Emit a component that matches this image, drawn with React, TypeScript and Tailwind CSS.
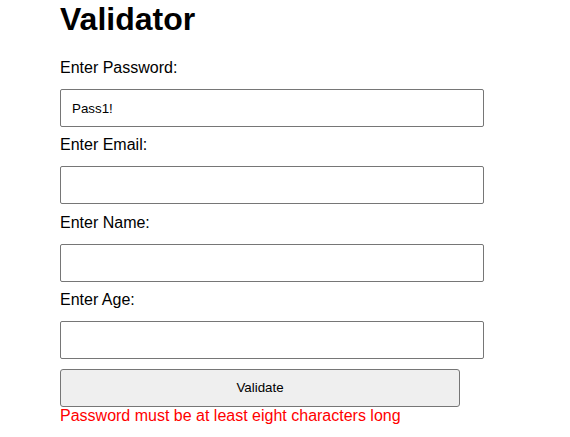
import React, { useState } from 'react';

const fields = [
  { id: 'password', label: 'Enter Password:', initial: 'Pass1!' },
  { id: 'email', label: 'Enter Email:', initial: '' },
  { id: 'name', label: 'Enter Name:', initial: '' },
  { id: 'age', label: 'Enter Age:', initial: '' },
];

export default function App() {
  const [values, setValues] = useState<Record<string, string>>(
    Object.fromEntries(fields.map((f) => [f.id, f.initial]))
  );
  const [error] = useState('Password must be at least eight characters long');

  return (
    <div className="min-h-[437px] bg-white pl-[60px] font-['Liberation_Sans',Arial,sans-serif] text-black">
      <h1 className="pt-px text-[32px] font-bold leading-[37px]">Validator</h1>
      <div className="mt-[21px] flex w-[424px] flex-col">
        {fields.map((f, idx) => (
          <div key={f.id} className={idx > 0 ? 'mt-[9.33px]' : ''}>
            <label htmlFor={f.id} className="block text-base leading-[18px]">
              {f.label}
            </label>
            <input
              id={f.id}
              type="text"
              value={values[f.id]}
              onChange={(e) => setValues({ ...values, [f.id]: e.target.value })}
              className="mt-[12px] block h-[38px] w-[424px] rounded-[2px] border border-[#767676] px-[11px] text-[13.33px] outline-none"
            />
          </div>
        ))}
      </div>
      <button className="mt-[10.5px] block h-[38px] w-[400px] rounded-[3px] border border-[#767676] bg-[#efefef] text-[13.33px]">
        Validate
      </button>
      <p className="text-base leading-[18px] text-[#ff0000]">{error}</p>
    </div>
  );
}
